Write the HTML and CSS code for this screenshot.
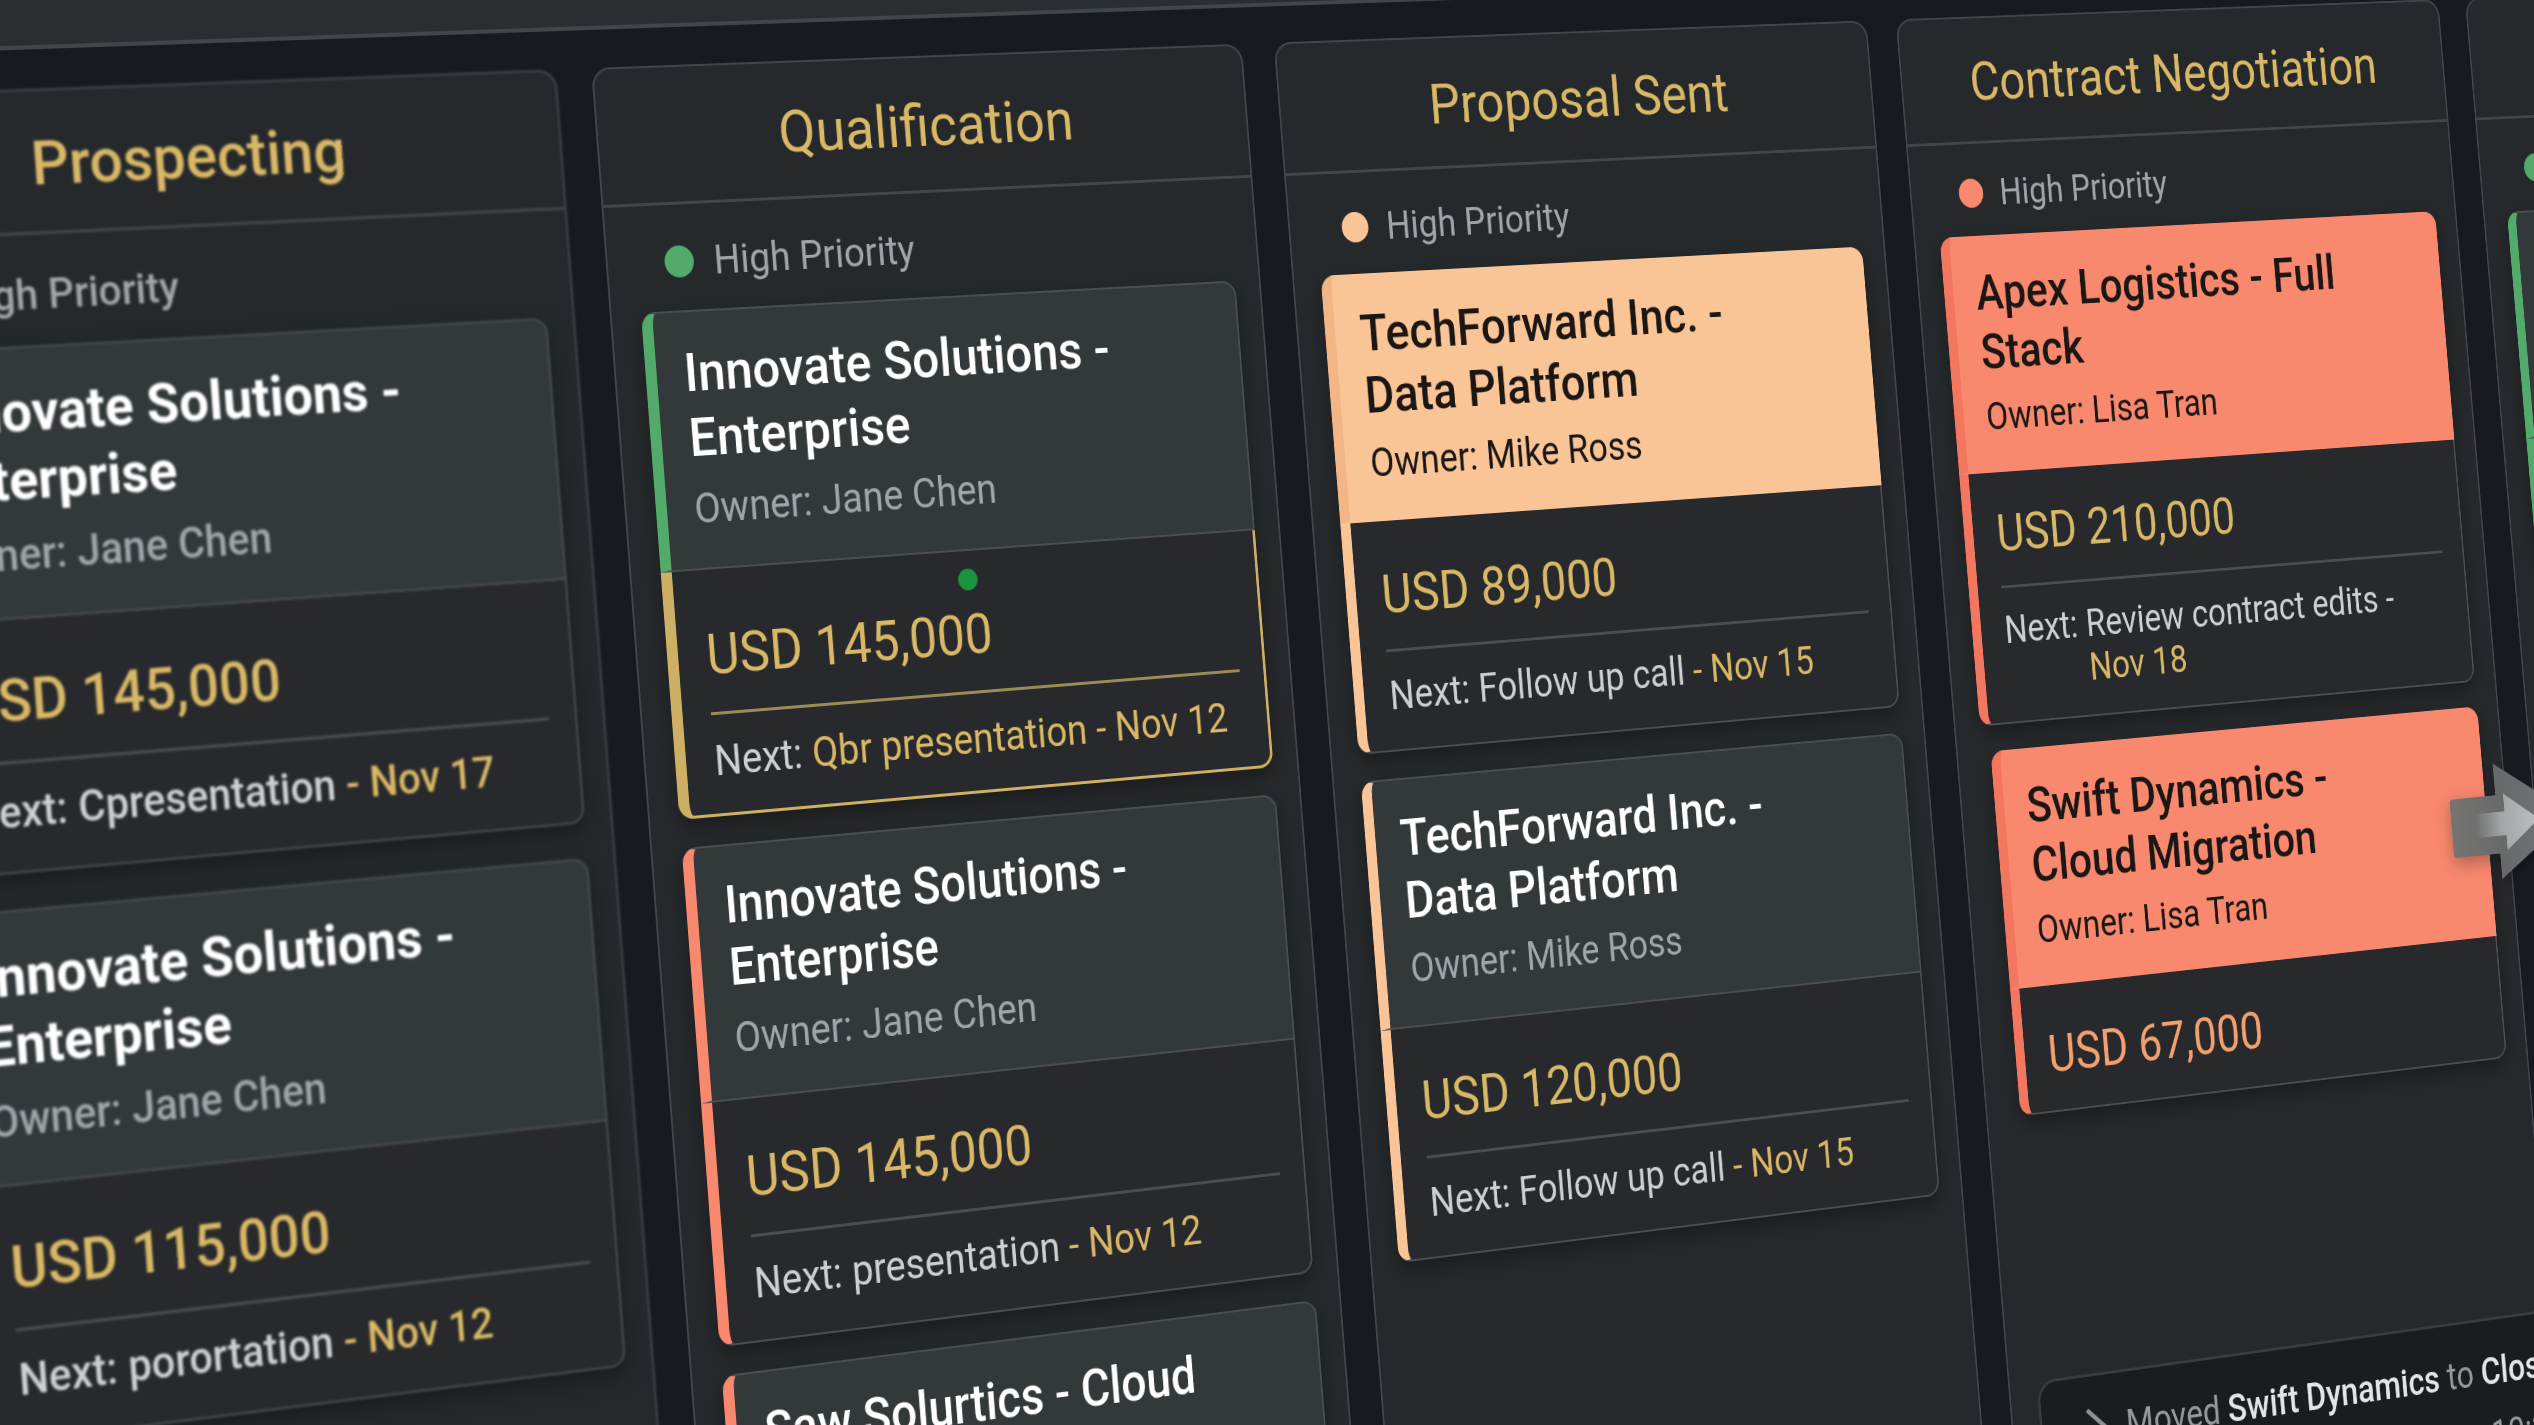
FILE: index.html
```html
<!DOCTYPE html>
<html lang="en">
<head>
    <meta charset="UTF-8">
    <meta name="viewport" content="width=device-width, initial-scale=1.0">
    <title>Sales Pipeline</title>
    <link rel="stylesheet" href="styles.css">
</head>
<body>
    <div class="board">
        <header class="topbar"></header>

        <main class="columns">
            <section class="column far">
                <h2>Prospecting</h2>
                <p class="priority"><span class="dot green"></span>High Priority</p>
                <article class="card green">
                    <div class="card-head">
                        <h3>Innovate Solutions - Enterprise</h3>
                        <p>Owner: Jane Chen</p>
                    </div>
                    <div class="card-body">
                        <p class="amount">USD 145,000</p>
                        <p class="next"><span>Next:</span><span>Cpresentation <b>- Nov 17</b></span></p>
                    </div>
                </article>
                <article class="card coral">
                    <div class="card-head">
                        <h3>Innovate Solutions - Enterprise</h3>
                        <p>Owner: Jane Chen</p>
                    </div>
                    <div class="card-body">
                        <p class="amount">USD 115,000</p>
                        <p class="next"><span>Next:</span><span>porortation <b>- Nov 12</b></span></p>
                    </div>
                </article>
            </section>

            <section class="column">
                <h2>Qualification</h2>
                <p class="priority"><span class="dot green"></span>High Priority</p>
                <article class="card green selected">
                    <div class="card-head">
                        <h3>Innovate Solutions - Enterprise</h3>
                        <p>Owner: Jane Chen</p>
                    </div>
                    <div class="card-body">
                        <span class="status"></span>
                        <p class="amount">USD 145,000</p>
                        <p class="next"><span>Next:</span><span><b>Qbr presentation - Nov 12</b></span></p>
                    </div>
                </article>
                <article class="card coral small">
                    <div class="card-head">
                        <h3>Innovate Solutions -<br>Enterprise</h3>
                        <p>Owner: Jane Chen</p>
                    </div>
                    <div class="card-body">
                        <p class="amount">USD 145,000</p>
                        <p class="next"><span>Next:</span><span>presentation <b>- Nov 12</b></span></p>
                    </div>
                </article>
                <article class="card coral small">
                    <div class="card-head">
                        <h3>Saw Solurtics - Cloud<br>Migration</h3>
                    </div>
                    <div class="card-body"></div>
                </article>
            </section>

            <section class="column">
                <h2>Proposal Sent</h2>
                <p class="priority"><span class="dot peach"></span>High Priority</p>
                <article class="card peach filled">
                    <div class="card-head">
                        <h3>TechForward Inc. -<br>Data Platform</h3>
                        <p>Owner: Mike Ross</p>
                    </div>
                    <div class="card-body">
                        <p class="amount">USD 89,000</p>
                        <p class="next"><span>Next:</span><span>Follow up call <b>- Nov 15</b></span></p>
                    </div>
                </article>
                <article class="card peach">
                    <div class="card-head">
                        <h3>TechForward Inc. -<br>Data Platform</h3>
                        <p>Owner: Mike Ross</p>
                    </div>
                    <div class="card-body">
                        <p class="amount">USD 120,000</p>
                        <p class="next"><span>Next:</span><span>Follow up call <b>- Nov 15</b></span></p>
                    </div>
                </article>
            </section>

            <section class="column compact">
                <h2>Contract Negotiation</h2>
                <p class="priority"><span class="dot coral"></span>High Priority</p>
                <article class="card coral filled">
                    <div class="card-head">
                        <h3>Apex Logistics - Full Stack</h3>
                        <p>Owner: Lisa Tran</p>
                    </div>
                    <div class="card-body">
                        <p class="amount">USD 210,000</p>
                        <p class="next"><span>Next:</span><span>Review contract edits -<br><b>Nov 18</b></span></p>
                    </div>
                </article>
                <article class="card coral filled moving">
                    <div class="card-head">
                        <h3>Swift Dynamics -<br>Cloud Migration</h3>
                        <p>Owner: Lisa Tran</p>
                    </div>
                    <div class="card-body">
                        <p class="amount">USD 67,000</p>
                    </div>
                    <svg class="move-arrow" viewBox="0 0 172 131" aria-hidden="true">
                        <defs>
                            <linearGradient id="outer" x1="0" x2="1" y1="0" y2="0">
                                <stop offset="0" stop-color="#767471"/>
                                <stop offset="0.4" stop-color="#686a6a"/>
                                <stop offset="1" stop-color="#727577"/>
                            </linearGradient>
                            <linearGradient id="inner" x1="0" x2="1" y1="0" y2="0">
                                <stop offset="0" stop-color="#a8aaac" stop-opacity="0"/>
                                <stop offset="0.4" stop-color="#a3a5a6"/>
                                <stop offset="1" stop-color="#bcbec0"/>
                            </linearGradient>
                        </defs>
                        <path fill="url(#outer)" d="M4 36H65V0L172 66L65 131V102H4Q0 102 0 98V40Q0 36 4 36Z"/>
                        <path fill="url(#inner)" d="M34 55H76V35L124 67L76 99V82H34Z"/>
                    </svg>
                </article>
            </section>

            <section class="column">
                <h2>Closed Won</h2>
                <p class="priority"><span class="dot green"></span>High Priority</p>
                <article class="card green">
                    <div class="card-head">
                        <h3>Northwind Group -<br>Renewal</h3>
                        <p>Owner: Lisa Tran</p>
                    </div>
                    <div class="card-body">
                        <p class="amount">USD 98,000</p>
                    </div>
                </article>
            </section>
        </main>

        <div class="toast" role="status">
            <svg viewBox="0 0 32 48" aria-hidden="true"><path d="M4 4L26 24L4 44" fill="none" stroke="#8f9294" stroke-width="5"/></svg>
            <div>
                <p>Moved <b>Swift Dynamics</b> to <b>Closed Won</b></p>
                <p class="time">10:24</p>
            </div>
        </div>
    </div>
</body>
</html>
```
FILE: styles.css
```css
:root {
    --bg: #171b1f;
    --column: #26292c;
    --line: #424649;
    --card-line: #4a4e51;
    --gold: #d8b766;
    --green: #52ab6b;
    --peach: #fac596;
    --coral: #f8886e;
}

* {
    box-sizing: border-box;
}

body {
    margin: 0;
    height: 100vh;
    overflow: hidden;
    background: var(--bg);
    font-family: Roboto, "Liberation Sans", sans-serif;
    color: #fff;
}

h2, h3, p {
    margin: 0;
}

/* the whole board is seen from the left, turned away to the right */
.board {
    position: relative;
    width: 152vw;
    transform-origin: 0 0;
    transform: matrix3d(1.005, -0.03153, 0, 0.00006569, 0.07659, 1.04974, 0, -0.00000525, 0, 0, 1, 0, -175, -93, 0, 1);
}

.topbar {
    height: 142px;
    background: #2a2e31;
    border-bottom: 4px solid var(--line);
}

.columns {
    display: grid;
    grid-template-columns: repeat(5, 1fr);
    gap: 38px;
    padding-top: 38px;
    min-height: 140vh;
}

.column {
    display: flex;
    flex-direction: column;
    background: var(--column);
    border: 2px solid var(--line);
    border-radius: 20px;
}

.column h2 {
    padding: 35px 4px 30px 0;
    border-bottom: 3px solid var(--line);
    font-size: 60px;
    line-height: 70px;
    font-weight: 400;
    text-align: center;
    color: var(--gold);
}

.priority {
    display: flex;
    align-items: center;
    gap: 22px;
    padding: 32px 0 24px 62px;
    font-size: 41px;
    line-height: 50px;
    color: #a2a5a8;
}

.dot {
    width: 32px;
    height: 32px;
    border-radius: 50%;
    background: var(--accent);
}

.green {
    --accent: var(--green);
}

.peach {
    --accent: var(--peach);
}

.coral {
    --accent: var(--coral);
}

.card {
    position: relative;
    margin: 0 28px 28px 32px;
    border-radius: 16px;
    box-shadow: 0 8px 20px rgba(0, 0, 0, 0.35);
}

.card-head {
    padding: 28px 28px 34px 30px;
    background: #33383b;
    border: 2px solid var(--card-line);
    border-left: 12px solid var(--accent);
    border-radius: 16px 16px 0 0;
}

.card-head h3 {
    font-size: 54px;
    line-height: 65px;
    font-weight: 500;
}

.card-head p {
    margin-top: 14px;
    font-size: 42px;
    line-height: 50px;
    color: #a2a5a8;
}

.card-body {
    position: relative;
    padding: 44px 28px 32px 31px;
    background: #27292c;
    border: 2px solid var(--card-line);
    border-top: 0;
    border-left: 12px solid var(--accent);
    border-radius: 0 0 16px 16px;
}

.amount {
    font-size: 56px;
    line-height: 66px;
    color: var(--gold);
}

.next {
    display: flex;
    gap: 11px;
    margin-top: 24px;
    padding-top: 22px;
    border-top: 3px solid var(--card-line);
    font-size: 42px;
    line-height: 48px;
    color: #cdcfd1;
}

.next b {
    font-weight: 400;
    color: var(--gold);
}

.small h3 {
    font-size: 51px;
    line-height: 62px;
}

/* selected deal */
.selected .card-body {
    padding-top: 52px;
    padding-bottom: 28px;
    border-width: 0 3px 3px 12px;
    border-color: #cdb063;
}

.selected .next {
    border-top-color: #9c8b55;
}

.status {
    position: absolute;
    top: 18px;
    left: 48%;
    width: 22px;
    height: 22px;
    border-radius: 50%;
    background: #1b9440;
}

/* coloured header */
.filled .card-head {
    background: var(--accent);
    border-color: var(--accent);
    color: #1c1714;
}

.filled .card-head p {
    color: #1c1714;
}

.filled.peach .card-head {
    border-left-color: #f2b586;
}

.filled.coral .card-head,
.filled.coral .card-body {
    border-left-color: #f3765f;
}

.compact .priority {
    padding: 29px 0 22px 62px;
}

.compact .card-body {
    padding-top: 34px;
    padding-bottom: 28px;
}

.compact .moving {
    margin-left: 43px;
}

.compact .moving .card-body {
    padding-top: 42px;
}

.moving .amount {
    color: #f2a070;
}

.move-arrow {
    position: absolute;
    top: 66px;
    right: -122px;
    width: 172px;
    z-index: 2;
    filter: drop-shadow(0 6px 10px rgba(0, 0, 0, 0.3));
}

/* out of focus */
.far {
    filter: blur(1px);
}

.far h2 {
    padding-right: 44px;
}

.far .priority {
    padding-left: 42px;
}

.far .card {
    margin-bottom: 34px;
}

.far .green .card-head {
    padding-left: 16px;
}

.far .coral .card-body {
    padding-left: 40px;
}

.far h2,
.far .priority,
.far .amount,
.far .next,
.far .next b,
.far .card-head p {
    font-weight: 500;
}

.far h3 {
    font-weight: 700;
}

.toast {
    position: absolute;
    top: 1669px;
    left: 2371px;
    display: flex;
    gap: 22px;
    width: 1100px;
    padding: 32px 56px;
    background: #1a1d20;
    border: 3px solid #383c3f;
    border-radius: 24px;
    font-size: 42px;
    line-height: 50px;
    color: #96999b;
}

.toast svg {
    width: 32px;
    height: 48px;
}

.toast b {
    font-weight: 500;
    color: #e2e4e5;
}

.toast .time {
    margin: 20px 0 0 494px;
}
```
